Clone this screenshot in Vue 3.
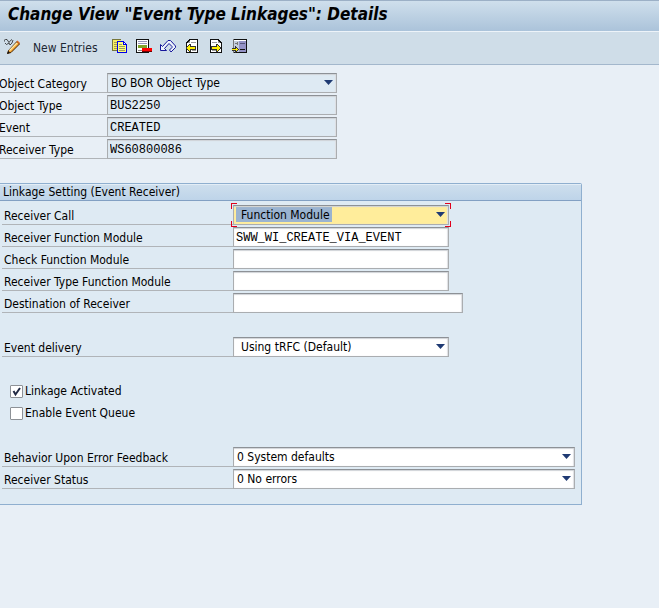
<script setup>
import { ref } from 'vue'

const header = ref([
  { id: 'otype', label: 'Object Type', value: 'BUS2250' },
  { id: 'event', label: 'Event', value: 'CREATED' },
  { id: 'rtype', label: 'Receiver Type', value: 'WS60800086' }
])
const modules = ref([
  { id: 'rfm', label: 'Receiver Function Module', value: 'SWW_WI_CREATE_VIA_EVENT' },
  { id: 'cfm', label: 'Check Function Module', value: '' },
  { id: 'rtfm', label: 'Receiver Type Function Module', value: '' },
  { id: 'dest', label: 'Destination of Receiver', value: '', wide: true }
])
const statuses = [
  { id: 'behavior', label: 'Behavior Upon Error Feedback', value: '0 System defaults' },
  { id: 'status', label: 'Receiver Status', value: '0 No errors' }
]
const activated = ref(true)
const queue = ref(false)
</script>

<template>
  <div class="page">
    <h1 class="title">Change View "Event Type Linkages": Details</h1>
    <div class="toolbar">
      <button class="tool" aria-label="Display or change">
        <svg viewBox="0 0 16 16">
          <path d="M0 3V1.500L1.500.5H3L4 2 5 3.500 6.500 1.500 8 .5M1 4l1.500 1.500L5 4l1 2 2-2 1-3" fill="none" stroke="#222" stroke-width=".8" />
          <path d="M4.500 11.500 13 2.500l2.500 2.500-8.500 8.500L3.500 14.500z" fill="#f9a733" stroke="#402000" />
          <path d="M5.500 11.500 13 4" stroke="#ffe9a5" stroke-width="1.500" />
          <path d="M12.500 2.500 13.500 1.500 16 4 15 5z" fill="#d96a20" />
          <path d="M4.500 12 6 13.500 3 15z" fill="#111" />
        </svg>
      </button>
      <button class="entries">New Entries</button>
      <button class="tool" aria-label="Copy as">
        <svg viewBox="0 0 16 16" shape-rendering="crispEdges">
          <path d="M0 0h9v12H0z" fill="#77773c" />
          <path d="M1 1h8v10H1z" fill="#f5ee62" />
          <path d="M2 3h3v1H2zM2 5h3v1H2zM2 7h3v1H2zM2 9h3v1H2z" fill="#a5a04a" />
          <path d="M5 2h7v1h1v1h1v1h1v9H5z" fill="#0000e8" />
          <path d="M6 3h5v3h3v7H6z" fill="#ffff77" />
          <path d="M12 4h1v1h-1z" fill="#fff" />
          <path d="M7 5h3v1H7zM7 7h6v1H7zM7 9h6v1H7zM7 11h6v1H7z" fill="#9a9a66" />
        </svg>
      </button>
      <button class="tool" aria-label="Delete">
        <svg viewBox="0 0 16 16" shape-rendering="crispEdges">
          <path d="M0 0h13v14H0z" fill="#111" />
          <path d="M1 1h11v12H1z" fill="#fff" />
          <path d="M2 2h9v1H2zM2 4h9v1H2z" fill="#9695b8" />
          <path d="M2 6h9v3H2z" fill="#80a32b" />
          <path d="M2 11h4v1H2z" fill="#888" />
          <path d="M6 9h10v4H6z" fill="#ff0000" />
          <path d="M6 12h10v1H6z" fill="#700000" />
        </svg>
      </button>
      <button class="tool" aria-label="Undo change">
        <svg viewBox="0 0 16 16">
          <path d="M.5 5.500v6h6L4.500 9.500 9 4.500l3 3v1l-2.500 2.500 1.500 2 4.500-4.500V7L10.500 1.500H8L2.500 7.500z" fill="#eef3fb" stroke="#15159a" />
        </svg>
      </button>
      <button class="tool" aria-label="Previous entry">
        <svg viewBox="0 0 16 16" shape-rendering="crispEdges">
          <path d="M5 0h9v14H2V3h1V2h1V1h1z" fill="#111" />
          <path d="M6 1h7v12H3V4h3z" fill="#fff" />
          <path d="M4 3h1V2h1v2H4zM7 3h5v1H7zM8 11h4v1H8z" fill="#999" />
          <path d="M2 8h1V7h1V6h1V5h2v2h5v4H7v2H5v-1H4v-1H3v-1H2z" fill="#333" />
          <path d="M3 8.500 6 6v2h5v2H6v2L3 9.500z" fill="#ffee00" />
        </svg>
      </button>
      <button class="tool" aria-label="Next entry">
        <svg viewBox="0 0 16 16" shape-rendering="crispEdges">
          <path d="M2 0h9v1h1v1h1v1h1v11H2z" fill="#111" />
          <path d="M3 1h7v3h3v9H3z" fill="#fff" />
          <path d="M10 2h1v1h1v1h-2zM4 3h5v1H4zM4 11h4v1H4z" fill="#999" />
          <path d="M13 8h-1V7h-1V6h-1V5H8v2H3v4h5v2h2v-1h1v-1h1v-1h1z" fill="#333" />
          <path d="M12 8.500 9 6v2H4v2h5v2l3-2.500z" fill="#ffee00" />
        </svg>
      </button>
      <button class="tool" aria-label="Other entry">
        <svg viewBox="0 0 16 16" shape-rendering="crispEdges">
          <path d="M1 0h14v14H1z" fill="#111" />
          <path d="M1 0h1v14H1z" fill="#777" />
          <path d="M2 1h5v12H2z" fill="#c4cede" />
          <path d="M7 1h7v12H7z" fill="#9492c6" />
          <path d="M2 1h12v1H2z" fill="#fff" />
          <path d="M8 4h5v1H8z" fill="#55557a" />
          <path d="M8 10h5v1H8z" fill="#111" />
          <path d="M3 4h3v1H3zM5 3h1v3H5z" fill="#777" />
          <path d="M0 9h3V7h1v1h1v1h1v1h1v1H6v1H5v1H4v1H3v-2H0z" fill="#333" />
          <path d="M0 10h4V9h1v1h1v1H5v1H4v-1H0z" fill="#ffee00" />
        </svg>
      </button>
    </div>

    <main class="content">
      <div class="head">
        <div class="row">
          <label for="cat">Object Category</label>
          <span class="pick">
            <select id="cat" class="field"><option>BO BOR Object Type</option></select>
            <svg class="arrow" viewBox="0 0 9 5"><path d="M0 0h9L4.500 5z" fill="#1f3a73" /></svg>
          </span>
        </div>
        <div v-for="f in header" :key="f.id" class="row">
          <label :for="f.id">{{ f.label }}</label>
          <input :id="f.id" v-model="f.value" class="field mono" readonly />
        </div>
      </div>

      <section class="panel">
        <h2>Linkage Setting (Event Receiver)</h2>
        <div class="rows">
          <div class="row">
            <label for="call">Receiver Call</label>
            <span class="pick active">
              <select id="call" class="field inset"><option>Function Module</option></select>
              <svg class="arrow" viewBox="0 0 9 5"><path d="M0 0h9L4.500 5z" fill="#1f3a73" /></svg>
            </span>
          </div>
          <div v-for="f in modules" :key="f.id" class="row">
            <label :for="f.id">{{ f.label }}</label>
            <input :id="f.id" v-model="f.value" class="field mono" :class="{ wide: f.wide }" />
          </div>
          <div class="row spaced">
            <label for="delivery">Event delivery</label>
            <span class="pick">
              <select id="delivery" class="field inset"><option>Using tRFC (Default)</option></select>
              <svg class="arrow" viewBox="0 0 9 5"><path d="M0 0h9L4.500 5z" fill="#1f3a73" /></svg>
            </span>
          </div>
          <label class="check spaced">
            <input v-model="activated" type="checkbox" />Linkage Activated
          </label>
          <label class="check">
            <input v-model="queue" type="checkbox" />Enable Event Queue
          </label>
          <div v-for="(s, i) in statuses" :key="s.id" class="row" :class="{ spaced: i === 0 }">
            <label :for="s.id">{{ s.label }}</label>
            <span class="pick full">
              <select :id="s.id" class="field"><option>{{ s.value }}</option></select>
              <svg class="arrow" viewBox="0 0 9 5"><path d="M0 0h9L4.500 5z" fill="#1f3a73" /></svg>
            </span>
          </div>
        </div>
      </section>
    </main>
  </div>
</template>

<style>
body {
  margin: 0;
  background: #e8eff6;
}
</style>

<style scoped>
.page {
  min-height: 100vh;
  overflow-x: hidden;
  background: #e8eff6;
  color: #000;
  font: 12px/16px "DejaVu Sans Condensed", "DejaVu Sans", sans-serif;
}
.page * {
  box-sizing: border-box;
}
.title {
  margin: 0;
  height: 32px;
  padding-left: 8px;
  border-top: 1px solid #9cb0c6;
  border-bottom: 1px solid #edf3f9;
  background: linear-gradient(#cfdfec, #abc3da);
  font-size: 17px;
  line-height: 26px;
  font-style: italic;
  font-weight: bold;
  white-space: nowrap;
}
.toolbar {
  display: flex;
  align-items: center;
  gap: 8px;
  height: 33px;
  padding: 0 4px 2px;
  border-bottom: 1px solid #a3b7cc;
  background: #cfdde8;
}
button {
  padding: 0;
  border: 0;
  background: none;
  color: inherit;
  font: inherit;
}
.tool {
  width: 16px;
  height: 16px;
}
.tool svg {
  display: block;
  width: 16px;
  height: 16px;
}
.entries {
  width: 76px;
  padding: 2px 0 0 5px;
  color: #1c2733;
  text-align: left;
  white-space: nowrap;
}
.content {
  padding: 8px 77px 0 0;
}
.row {
  display: flex;
  height: 20px;
  margin-bottom: 2px;
}
.row label {
  flex: none;
  border-bottom: 1px solid #b0b4b8;
  line-height: 23px;
  white-space: nowrap;
}
.head .row label {
  width: 108px;
  margin-left: -1px;
}
.field {
  display: block;
  width: 216px;
  height: 20px;
  margin: 0;
  padding: 0 2px 1px;
  border: 1px solid #aaadb0;
  border-top-color: #8d9196;
  border-radius: 0;
  outline: 0;
  appearance: none;
  background: #fff;
  box-shadow: inset 0 1px 1px #d0d3d7, inset -1px 0 1px #dfe2e5;
  color: #000;
  font: inherit;
}
.head .field {
  width: 230px;
  background: #deeaf3;
}
.wide {
  width: 230px;
}
.field.mono {
  padding: 1px 2px 0;
  font-family: "Liberation Mono", monospace;
}
.pick {
  position: relative;
}
.pick .field {
  padding-left: 3px;
}
.pick .inset {
  padding-left: 7px;
}
.arrow {
  position: absolute;
  top: 7px;
  right: 4px;
  width: 9px;
  height: 5px;
  pointer-events: none;
}
.full {
  flex: 1;
}
.full .field {
  width: 100%;
}
.active .field {
  background: linear-gradient(#9ab3d0, #9ab3d0) 2px 1px / 96px 15px no-repeat #ffed9b;
}
.active::after {
  content: "";
  position: absolute;
  inset: -2px;
  pointer-events: none;
  --c: linear-gradient(#e0001b, #e0001b);
  background:
    var(--c) 0 0 / 6px 1px, var(--c) 0 0 / 1px 6px,
    var(--c) 100% 0 / 6px 1px, var(--c) 100% 0 / 1px 6px,
    var(--c) 0 100% / 6px 1px, var(--c) 0 100% / 1px 6px,
    var(--c) 100% 100% / 6px 1px, var(--c) 100% 100% / 1px 6px;
  background-repeat: no-repeat;
}
.panel {
  margin-top: 24px;
  border: 1px solid #8fafcf;
  border-left: 0;
  border-top-right-radius: 2px;
  background: #deeaf3;
}
.panel h2 {
  margin: 0;
  height: 17px;
  padding-left: 3px;
  border-top: 1px solid #e3edf6;
  border-bottom: 1px solid #82a0c3;
  background: linear-gradient(#cddeed, #bed4e9);
  font-size: 12px;
  line-height: 14px;
  font-weight: normal;
}
.rows {
  padding: 4px 6px 13px 2px;
}
.rows .row label {
  width: 231px;
  padding-left: 2px;
}
.rows .spaced {
  margin-top: 24px;
}
.check {
  display: flex;
  align-items: center;
  gap: 2px;
  width: max-content;
  height: 20px;
  margin-bottom: 2px;
  padding-left: 8px;
}
.check input {
  appearance: none;
  width: 13px;
  height: 13px;
  margin: 0;
  border: 1px solid #8d9196;
  border-radius: 1px;
  background: #fff;
}
.check input:checked {
  background: #fff url("data:image/svg+xml,%3Csvg xmlns='http://www.w3.org/2000/svg' viewBox='0 0 11 11'%3E%3Cpath d='M2.500 5l2 3.500L9 2' fill='none' stroke='%23222b45' stroke-width='2'/%3E%3C/svg%3E") center / 11px 11px no-repeat;
}
</style>
